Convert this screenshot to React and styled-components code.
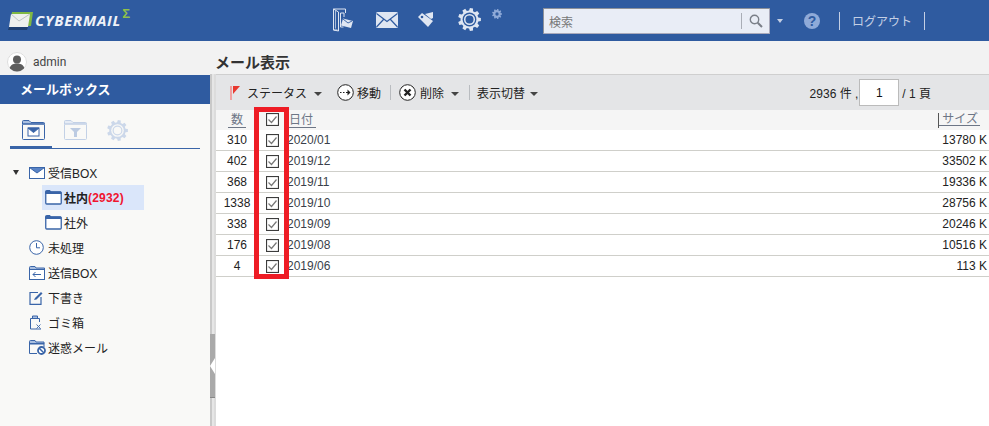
import React from "react";
import styled, { createGlobalStyle } from "styled-components";

const Global = createGlobalStyle`
  html, body { margin: 0; padding: 0; height: 100%; overflow: hidden; }
  body { font-family: "Liberation Sans", "Noto Sans CJK JP", sans-serif; font-size: 12px; color: #222; }
  * { box-sizing: border-box; }
`;

const Page = styled.div`
  position: relative; width: 989px; height: 426px; display: flex; flex-direction: column; overflow: hidden; background: #f2f2f2;
`;
const Header = styled.header`
  height: 41px; flex: none; background: #2f5ba0; display: flex; align-items: center; position: relative;
`;
const Logo = styled.div`
  width: 333px; flex: none; padding-left: 8px; display: flex; align-items: center; height: 100%;
`;
const LogoText = styled.span`
  font-family: "Open Sans", sans-serif; font-style: italic; font-weight: 700; font-size: 15px; color: #eef2f8; margin-left: 1px; letter-spacing: 0.75px; line-height: 1;
`;
const Sigma = styled.span`
  font-family: "Liberation Sans", sans-serif; font-weight: 700; font-size: 13px; color: #8fc04a; margin: -14px 0 0 1px; line-height: 1;
`;
const NavIcons = styled.nav`
  width: 210px; flex: none; display: flex; align-items: center; height: 100%; margin-top: -2px;
`;
const NavSlot = styled.span`
  display: flex; flex: none; width: ${p => p.$w}px; margin-top: ${p => p.$top || 0}px;
`;
const Search = styled.div`
  width: 227px; height: 26px; flex: none; margin-top: 1px; background: #e9edf6; border: 1px solid #8d9199; border-right-color: #aab; border-bottom-color: #aab; display: flex; align-items: center; padding-left: 5px; border-radius: 1px;
`;
const SearchLabel = styled.span`
  flex: 1; font-size: 12px; color: #777;
`;
const SearchBtn = styled.span`
  width: 28px; height: 16px; border-left: 1px solid #a9adb6; display: flex; align-items: center; justify-content: center;
`;
const HeadCaret = styled.span`
  width: 0; height: 0; border-left: 3.5px solid transparent; border-right: 3.5px solid transparent; border-top: 4px solid #c4cfe4; margin: 0 21px 0 7px;
`;
const Help = styled.span`
  width: 16px; height: 16px; flex: none; border-radius: 50%; background: #8faad8; color: #2f5ba0; font-weight: 700; font-size: 14px; line-height: 16px; text-align: center; margin-right: 19px;
`;
const LogoutWrap = styled.div`
  height: 18px; flex: none; width: 86px; border-left: 1px solid #c4cfe4; border-right: 1px solid #c4cfe4; padding-left: 12px; display: flex; align-items: center;
  font-size: 12px; color: #c4cfe4;
`;

const Body = styled.div`
  flex: 1; display: flex; min-height: 0;
`;
const Side = styled.aside`
  width: 210px; flex: none; display: flex; flex-direction: column;
`;
const UserRow = styled.div`
  height: 34px; flex: none; padding: 8px 0 0 7px; display: flex; align-items: center; font-family: Roboto, sans-serif; font-size: 12px; color: #444;
`;
const UserName = styled.span`
  margin-left: 6px;
`;
const SidePanel = styled.div`
  flex: 1; background: #f9f9f7; display: flex; flex-direction: column;
`;
const SideTitle = styled.div`
  height: 29px; flex: none; background: #2f5ba0; color: #fff; font-weight: 700; font-size: 13px; padding: 0 0 2px 20px; display: flex; align-items: center;
`;
const Tabs = styled.div`
  height: 45px; margin: 0 10px; flex: none; display: flex; position: relative; align-items: flex-end; padding-bottom: 6px; border-bottom: 1px solid #3a65a8;
`;
const TabSlot = styled.span`
  width: 42px; flex: none; display: flex; justify-content: center; height: 24px; align-items: center; padding-left: 4px;
`;
const ActiveMark = styled.span`
  position: absolute; left: 0; bottom: -1px; width: 42px; height: 3px; background: #3a65a8;
`;
const Tree = styled.ul`
  list-style: none; margin: 11px 0 0; padding: 0;
`;
const Item = styled.li`
  height: 25px; display: flex; align-items: center; padding-left: ${p => (p.$child ? 3 : 29)}px; margin-left: ${p => (p.$child ? 42 : 0)}px; width: ${p => (p.$child ? "102px" : "auto")}; background: ${p => (p.$active ? "#dae6fa" : "transparent")}; font-weight: ${p => (p.$active ? 700 : 400)}; font-size: 12px; color: #222; position: relative;
`;
const IconBox = styled.span`
  width: 19px; flex: none; display: flex; align-items: center;
`;
const Count = styled.span`
  color: #f0142f; font-size: 12px; letter-spacing: 0.2px;
`;
const Toggle = styled.span`
  position: absolute; left: 13px; top: 10px; width: 0; height: 0; border-left: 3.5px solid transparent; border-right: 3.5px solid transparent; border-top: 5px solid #333;
`;

const Splitter = styled.div`
  width: 6px; flex: none; margin-top: 33px; background: linear-gradient(90deg, #c9c9c9 0 2px, #e6e6e6 2px 4px, #dcdcdc 4px 6px); display: flex; flex-direction: column;
`;
const SplitHandle = styled.div`
  margin: 260px 0 0 0; height: 64px; width: 5px; background: #a9a9a9; border-bottom: 1px solid #888; display: flex; align-items: center;
`;
const SplitArrow = styled.span`
  width: 0; height: 0; border-top: 8px solid transparent; border-bottom: 8px solid transparent; border-right: 5px solid #fff;
`;

const Main = styled.main`
  flex: 1; display: flex; flex-direction: column; min-width: 0;
`;
const Title = styled.div`
  height: 33px; flex: none; padding: 7px 0 0 0; margin-left: -1px; font-weight: 700; font-size: 15px; color: #333; display: flex; align-items: center;
`;
const Toolbar = styled.div`
  height: 36px; flex: none; background: #e4e5e7; border-top: 1px solid #cfcfcf; display: flex; align-items: center; padding-left: 14px; font-size: 12px; color: #222;
`;
const ToolText = styled.span`
  margin-left: ${p => p.$ml || 0}px; white-space: nowrap;
`;
const Caret = styled.span`
  width: 0; height: 0; flex: none; border-left: 4px solid transparent; border-right: 4px solid transparent; border-top: 4px solid #444; margin: 2px 0 0 ${p => p.$ml || 7}px;
`;
const ToolSep = styled.span`
  width: 1px; height: 15px; flex: none; background: #b9bcc0; margin: 0 ${p => p.$r}px 0 ${p => p.$l}px;
`;
const ToolIcon = styled.span`
  display: flex; flex: none; margin-left: ${p => p.$ml || 0}px;
`;
const Pager = styled.div`
  margin-left: auto; display: flex; align-items: center; padding-right: 58px; font-size: 12px; color: #222; white-space: pre;
`;
const PageInput = styled.div`
  width: 40px; height: 27px; background: #fff; border: 1px solid #bbb; margin: 0 3px 0 1px; text-align: center; line-height: 27px; font-size: 12px; color: #111;
`;
const Grid = styled.div`
  flex: 1; background: #fff;
`;
const HeadRow = styled.div`
  height: 20px; background: #f5f5f5; display: grid; grid-template-columns: 42px 28px 1fr auto; align-items: center;
`;
const Row = styled.div`
  height: 21px; display: grid; grid-template-columns: 42px 28px 1fr auto; align-items: center; border-bottom: 1px solid #cfcfca; font-size: 12px; color: #222;
`;
const HeadCell = styled.span`
  display: flex; justify-content: ${p => (p.$center ? "center" : "flex-start")};
`;
const HeadLink = styled.span`
  color: #6d7686; font-size: 12px; line-height: 14px; border-bottom: 1px solid #6d7686; padding: 0 3px;
`;
const SizeHead = styled.span`
  border-left: 1px solid #555; margin-right: 9px; height: 15px; display: flex;
`;
const SizeLink = styled.span`
  color: #6d7686; font-size: 12px; line-height: 12px; height: 13px; border-bottom: 1px solid #6d7686; padding: 0 2px 0 3px;
`;
const Num = styled.span`
  text-align: center;
`;
const CheckCell = styled.span`
  display: flex; justify-content: center; padding-left: ${p => p.$pl || 0}px; margin-top: ${p => p.$top || 0}px;
`;
const DateCell = styled.span`
  padding-left: 1px; color: #3a3f4a;
`;
const SizeCell = styled.span`
  padding-right: 2px; text-align: right;
`;
const Annotation = styled.div`
  position: absolute; left: 254px; top: 107px; width: 35px; height: 172px; border: 5px solid #ee1c25; pointer-events: none;
`;

const Check = () => (
  <svg width="13" height="13" viewBox="0 0 13 13">
    <rect x="0.5" y="0.5" width="12" height="12" fill="#fff" stroke="#3c3c3c" strokeWidth="1.2" />
    <path d="M2.500 6.500l3 3 5-6" fill="none" stroke="#777" strokeWidth="1.200" />
  </svg>
);

const LogoMark = () => (
  <svg width="26" height="19" viewBox="0 0 26 19">
    <path d="M4 1h21l-2 14H2z" fill="#7fb843" />
    <path d="M3 3h19l-2 13H1z" fill="#eef0ee" />
    <path d="M3 3l8 7 11-7" fill="none" stroke="#bcc3c4" strokeWidth="1" />
    <path d="M1 16h19l-1 3H0z" fill="#1f3f70" />
  </svg>
);
const DoorIcon = () => (
  <svg width="21" height="24" viewBox="0 0 21 24" fill="none" stroke="#dfe6f2" strokeWidth="1">
    <path d="M.5 1h12v4M.5 1v21h4M.5 1l5 3v19l-5-1" />
    <path d="M2.500 2.500v18" strokeWidth=".7" />
    <path d="M7.500 5h3.500v4M7.500 5v14h3" />
    <path d="M10 10.500l10 2.500-2 7-10-2.500z" fill="#dfe6f2" stroke="none" />
    <path d="M10 11l5 4 4-2" stroke="#2f5ba0" strokeWidth=".9" />
  </svg>
);
const MailIcon = () => (
  <svg width="22" height="16" viewBox="0 0 22 16">
    <rect width="22" height="16" rx="1.500" fill="#dfe6f2" />
    <path d="M.5 1.500l10.500 8 10.500-8M.5 15l7-7.500M21.500 15l-7-7.500" fill="none" stroke="#2f5ba0" strokeWidth="1.200" />
  </svg>
);
const TagIcon = () => (
  <svg width="16" height="15" viewBox="0 0 16 15">
    <path d="M0 5l4-4 11 8-5 6z" fill="#dfe6f2" />
    <path d="M7 2l8-2v6l-2 1z" fill="#dfe6f2" />
    <circle cx="4" cy="5" r="1.300" fill="#2f5ba0" />
  </svg>
);
const gearPath = (c, ro, ri, n = 8) => {
  let d = "";
  const step = (Math.PI * 2) / n;
  for (let i = 0; i < n; i++) {
    const a = i * step;
    const pts = [
      [ri, a - step * 0.32], [ro, a - step * 0.2], [ro, a + step * 0.2], [ri, a + step * 0.32],
    ];
    pts.forEach(([r, t], k) => {
      d += `${i === 0 && k === 0 ? "M" : "L"}${(c + r * Math.cos(t)).toFixed(2)} ${(c + r * Math.sin(t)).toFixed(2)}`;
    });
  }
  return d + "Z";
};
const Gear = ({ size, fill, hole, inner, ring = 1.6 }) => (
  <svg width={size} height={size} viewBox="0 0 24 24">
    <path d={gearPath(12, 12, 9.4, 9)} fill={fill} />
    <circle cx="12" cy="12" r={inner || 7.2} fill={hole} />
    {!inner && <circle cx="12" cy="12" r="5" fill="none" stroke={fill} strokeWidth={ring} />}
  </svg>
);
const SearchGlyph = () => (
  <svg width="14" height="14" viewBox="0 0 14 14" fill="none" stroke="#7a7f88">
    <circle cx="5.500" cy="5.500" r="4.200" strokeWidth="1.400" />
    <path d="M8.700 8.700l4.300 4.300" strokeWidth="2" />
  </svg>
);
const Avatar = () => (
  <svg width="20" height="20" viewBox="0 0 20 20">
    <defs><clipPath id="av"><circle cx="10" cy="10" r="9.500" /></clipPath></defs>
    <circle cx="10" cy="10" r="10" fill="#fff" />
    <circle cx="10" cy="10" r="9.500" fill="none" stroke="#dcdcdc" />
    <g clipPath="url(#av)">
      <circle cx="10" cy="7.500" r="4" fill="#5d5d5d" />
      <path d="M2 20c0-6 3-8.500 8-8.500s8 2.500 8 8.500z" fill="#5d5d5d" />
    </g>
  </svg>
);
const FolderMailTab = () => (
  <svg width="23" height="20" viewBox="0 0 23 20" fill="none" stroke="#3a65a8">
    <path d="M.5 4V1.500a1 1 0 011-1H7l2 2h12.500a1 1 0 011 1V4z" fill="#a9bfe0" />
    <rect x=".5" y="4" width="22" height="15.500" rx="1" />
    <rect x="6" y="8" width="11" height="8" fill="#fff" />
    <path d="M6 8h11l-5.500 4.500z" fill="#3a65a8" />
  </svg>
);
const FolderFilterTab = () => (
  <svg width="23" height="20" viewBox="0 0 23 20" fill="none" stroke="#c3d1e6">
    <path d="M.5 4V1.500a1 1 0 011-1H7l2 2h12.500a1 1 0 011 1V4z" fill="#e6ecf5" />
    <rect x=".5" y="4" width="22" height="15.500" rx="1" />
    <path d="M6 8h11l-4 4v5h-3v-5z" fill="#bccbe2" stroke="none" />
  </svg>
);
const InboxIcon = () => (
  <svg width="16" height="12" viewBox="0 0 16 12" fill="none" stroke="#3a65a8">
    <rect x=".5" y=".5" width="15" height="11" fill="#fff" />
    <path d="M.5 .5h15L8 6z" fill="#5a84c6" />
  </svg>
);
const FolderIcon = () => (
  <svg width="17" height="15" viewBox="0 0 17 15" fill="none" stroke="#3a65a8">
    <rect x=".75" y="2" width="15.500" height="12" rx="1" fill="#fff" strokeWidth="1.300" />
    <path d="M.5 3.500V1.500a1 1 0 011-1H5l1 1.500h10v1.500z" fill="#3a65a8" />
  </svg>
);
const ClockIcon = () => (
  <svg width="15" height="15" viewBox="0 0 15 15" fill="none" stroke="#3a65a8">
    <circle cx="7.500" cy="7.500" r="6.800" fill="#fff" />
    <path d="M7.500 3v4.800h3.500" />
  </svg>
);
const SentIcon = () => (
  <svg width="16" height="14" viewBox="0 0 16 14" fill="none" stroke="#3a65a8">
    <path d="M.5 3V1.500a1 1 0 011-1H6l1 1.500h8.500V4H.5z" fill="#a9bfe0" />
    <rect x=".5" y="3.500" width="15" height="10" fill="#fff" />
    <path d="M12 8.500H4M6.500 6L4 8.500 6.500 11" />
  </svg>
);
const DraftIcon = () => (
  <svg width="14" height="14" viewBox="0 0 14 14" fill="none" stroke="#3a65a8">
    <path d="M9 1.500H1v11.800h11V6" strokeWidth="1.200" />
    <path d="M5 9l1-2 6-6 1.500 1.500-6 6z" fill="#3a65a8" stroke="none" />
  </svg>
);
const TrashIcon = () => (
  <svg width="13" height="15" viewBox="0 0 13 15" fill="none" stroke="#3a65a8">
    <path d="M1.500 3.500V14h10.500M1.500 3.500h9V7" />
    <path d="M3.500 3V1h5v2" fill="#a9bfe0" />
    <path d="M7.500 9.500l4 4M11.500 9.500l-4 4" strokeWidth=".9" />
  </svg>
);
const SpamIcon = () => (
  <svg width="17" height="15" viewBox="0 0 17 15" fill="none" stroke="#3a65a8">
    <path d="M.5 3V1.500a1 1 0 011-1H6l1 1.500h8v2H.5z" fill="#a9bfe0" />
    <path d="M8 13.500H.5v-10h14.500V7" />
    <circle cx="12.500" cy="10.500" r="3.500" fill="#fff" strokeWidth="1.800" />
    <path d="M10 8l5 5" strokeWidth="1.500" />
  </svg>
);
const Flag = () => (
  <svg width="10" height="14" viewBox="0 0 10 14">
    <rect width="2" height="14" fill="#f0a0a0" />
    <path d="M3 0h7L3 8z" fill="#e8382f" />
  </svg>
);
const MoveIcon = () => (
  <svg width="17" height="17" viewBox="0 0 17 17" fill="none" stroke="#222">
    <circle cx="8.500" cy="8.500" r="7.800" fill="#fff" />
    <path d="M3 8.500h1.500M6 8.500h1.500M9 8.500h4" strokeWidth="1.200" />
    <path d="M10.500 5.500l3 3-3 3" fill="#222" stroke="none" />
  </svg>
);
const DeleteIcon = () => (
  <svg width="17" height="17" viewBox="0 0 17 17" fill="none" stroke="#222">
    <circle cx="8.500" cy="8.500" r="7.800" fill="#fff" />
    <path d="M5.500 5.500l6 6M11.500 5.500l-6 6" strokeWidth="2.400" />
  </svg>
);

const rows = [
  ["310", "2020/01", "13780 K"],
  ["402", "2019/12", "33502 K"],
  ["368", "2019/11", "19336 K"],
  ["1338", "2019/10", "28756 K"],
  ["338", "2019/09", "20246 K"],
  ["176", "2019/08", "10516 K"],
  ["4", "2019/06", "113 K"],
];

export default function App() {
  return (
    <Page>
      <Global />
      <Header>
        <Logo>
          <LogoMark />
          <LogoText>CYBERMAIL</LogoText>
          <Sigma>Σ</Sigma>
        </Logo>
        <NavIcons>
          <NavSlot $w={43}><DoorIcon /></NavSlot>
          <NavSlot $w={42}><MailIcon /></NavSlot>
          <NavSlot $w={40}><TagIcon /></NavSlot>
          <NavSlot $w={34}><Gear size={23} fill="#dfe6f2" hole="#2f5ba0" /></NavSlot>
          <NavSlot $w={51} $top={-11}><Gear size={10} fill="#8faad8" hole="#2f5ba0" inner={4} /></NavSlot>
        </NavIcons>
        <Search>
          <SearchLabel>検索</SearchLabel>
          <SearchBtn><SearchGlyph /></SearchBtn>
        </Search>
        <HeadCaret />
        <Help>?</Help>
        <LogoutWrap>ログアウト</LogoutWrap>
      </Header>
      <Body>
        <Side>
          <UserRow>
            <Avatar />
            <UserName>admin</UserName>
          </UserRow>
          <SidePanel>
            <SideTitle>メールボックス</SideTitle>
            <Tabs>
              <TabSlot><FolderMailTab /></TabSlot>
              <TabSlot><FolderFilterTab /></TabSlot>
              <TabSlot><Gear size={21} fill="#ccd8ea" hole="#f9f9f7" ring={1.4} /></TabSlot>
              <ActiveMark />
            </Tabs>
            <Tree>
              <Item><Toggle /><IconBox><InboxIcon /></IconBox>受信BOX</Item>
              <Item $child $active><IconBox><FolderIcon /></IconBox>社内<Count>(2932)</Count></Item>
              <Item $child><IconBox><FolderIcon /></IconBox>社外</Item>
              <Item><IconBox><ClockIcon /></IconBox>未処理</Item>
              <Item><IconBox><SentIcon /></IconBox>送信BOX</Item>
              <Item><IconBox><DraftIcon /></IconBox>下書き</Item>
              <Item><IconBox><TrashIcon /></IconBox>ゴミ箱</Item>
              <Item><IconBox><SpamIcon /></IconBox>迷惑メール</Item>
            </Tree>
          </SidePanel>
        </Side>
        <Splitter>
          <SplitHandle><SplitArrow /></SplitHandle>
        </Splitter>
        <Main>
          <Title>メール表示</Title>
          <Toolbar>
            <ToolIcon><Flag /></ToolIcon>
            <ToolText $ml={7}>ステータス</ToolText>
            <Caret />
            <ToolIcon $ml={15}><MoveIcon /></ToolIcon>
            <ToolText $ml={3}>移動</ToolText>
            <ToolSep $l={9} $r={8} />
            <ToolIcon><DeleteIcon /></ToolIcon>
            <ToolText $ml={4}>削除</ToolText>
            <Caret />
            <ToolSep $l={10} $r={7} />
            <ToolText>表示切替</ToolText>
            <Caret $ml={5} />
            <Pager>
              {"2936 件 ,"}
              <PageInput>1</PageInput>
              {"/ 1 頁"}
            </Pager>
          </Toolbar>
          <Grid>
            <HeadRow>
              <HeadCell $center><HeadLink>数</HeadLink></HeadCell>
              <CheckCell $top={-1}><Check /></CheckCell>
              <HeadCell><HeadLink>日付</HeadLink></HeadCell>
              <SizeHead><SizeLink>サイズ</SizeLink></SizeHead>
            </HeadRow>
            {rows.map(r => (
              <Row key={r[1]}>
                <Num>{r[0]}</Num>
                <CheckCell $pl={1}><Check /></CheckCell>
                <DateCell>{r[1]}</DateCell>
                <SizeCell>{r[2]}</SizeCell>
              </Row>
            ))}
          </Grid>
        </Main>
      </Body>
      <Annotation />
    </Page>
  );
}
